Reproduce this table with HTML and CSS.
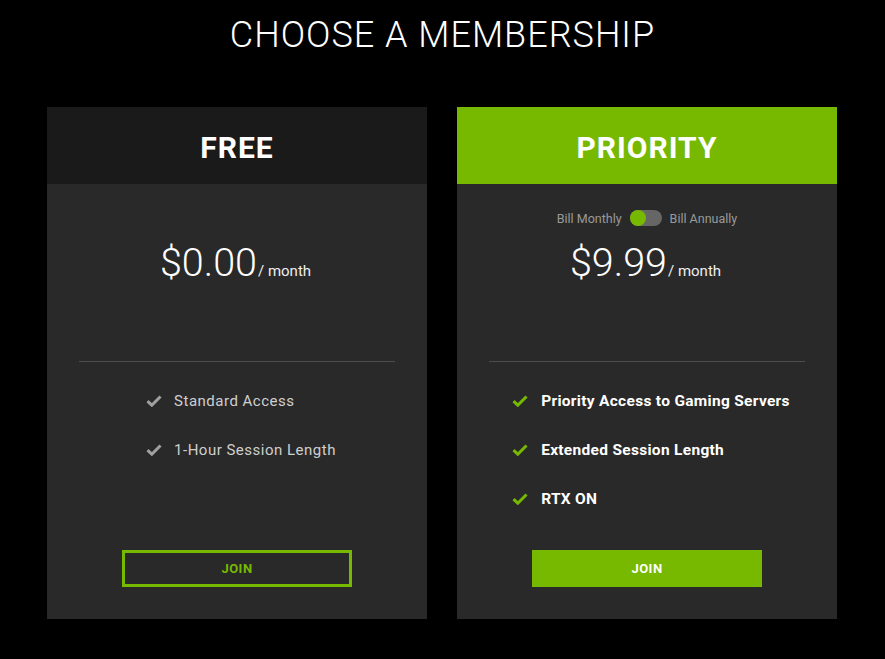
FILE: index.html
```
<!DOCTYPE html>
<html>
<head>
<meta charset="utf-8">
<link rel="stylesheet" href="styles.css">
</head>
<body>
<main class="page">
  <h1 class="title">CHOOSE A MEMBERSHIP</h1>
  <div class="plans">
    <section class="card">
      <div class="card-head free">FREE</div>
      <div class="card-body">
        <div class="top">
          <div class="billing hidden"><span>Bill Monthly</span><span class="toggle"><span class="knob"></span></span><span>Bill Annually</span></div>
          <div class="price"><span class="amount">$0.00</span><span class="per">/ month</span></div>
        </div>
        <ul class="features">
          <li><svg class="check" viewBox="0 0 16 12"><path d="M1.5 6.2 L5.8 10.2 L14.5 1.5" /></svg><span>Standard Access</span></li>
          <li><svg class="check" viewBox="0 0 16 12"><path d="M1.5 6.2 L5.8 10.2 L14.5 1.5" /></svg><span>1-Hour Session Length</span></li>
        </ul>
        <button class="join outline">JOIN</button>
      </div>
    </section>
    <section class="card">
      <div class="card-head priority">PRIORITY</div>
      <div class="card-body">
        <div class="top">
          <div class="billing"><span>Bill Monthly</span><span class="toggle"><span class="knob"></span></span><span>Bill Annually</span></div>
          <div class="price"><span class="amount">$9.99</span><span class="per">/ month</span></div>
        </div>
        <ul class="features strong">
          <li><svg class="check" viewBox="0 0 16 12"><path d="M1.5 6.2 L5.8 10.2 L14.5 1.5" /></svg><span>Priority Access to Gaming Servers</span></li>
          <li><svg class="check" viewBox="0 0 16 12"><path d="M1.5 6.2 L5.8 10.2 L14.5 1.5" /></svg><span>Extended Session Length</span></li>
          <li><svg class="check" viewBox="0 0 16 12"><path d="M1.5 6.2 L5.8 10.2 L14.5 1.5" /></svg><span>RTX ON</span></li>
        </ul>
        <button class="join filled">JOIN</button>
      </div>
    </section>
  </div>
</main>
</body>
</html>
```
FILE: styles.css
```
* { box-sizing: border-box; }
html, body { margin: 0; padding: 0; background: #000; }
body { font-family: Roboto, "Liberation Sans", sans-serif; color: #fff; }
.page { width: 885px; height: 659px; padding-top: 13px; }
.title {
  margin: 0;
  text-align: center;
  font-family: Roboto, sans-serif;
  font-weight: 300;
  font-size: 36px;
  line-height: 44px;
  letter-spacing: 1px;
  color: #fff;
}
.plans {
  display: grid;
  grid-template-columns: 380px 380px;
  column-gap: 30px;
  padding-left: 47px;
  margin-top: 50px;
}
.card { background: #292929; height: 512px; display: flex; flex-direction: column; }
.card-head {
  height: 77px;
  display: flex; align-items: center; justify-content: center;
  font-weight: 700; font-size: 30px; letter-spacing: 1px;
  padding-top: 3px;
}
.card-head.free { background: #1a1a1a; }
.card-head.priority { background: #76b900; }
.card-body { flex: 1; display: flex; flex-direction: column; align-items: center; padding: 0 32px 32px; }
.top { width: 100%; height: 178px; border-bottom: 1px solid #4d4d4d; padding-top: 24px; display: flex; flex-direction: column; align-items: center; }
.billing { display: flex; align-items: center; gap: 8px; font-size: 12.5px; color: #9a9a9a; height: 20px; }
.billing.hidden { visibility: hidden; }
.toggle { width: 32px; height: 16px; border-radius: 8px; background: #666; position: relative; }
.knob { position: absolute; left: 0; top: 0; width: 16px; height: 16px; border-radius: 50%; background: #76b900; }
.price { margin-top: 13px; display: flex; align-items: baseline; margin-left: -3px; }
.amount { font-weight: 300; font-size: 39.5px; line-height: 44px; }
.per { font-size: 15px; color: #eee; margin-left: 1px; }
.features { list-style: none; margin: 27px 0 0 8px; padding: 0; }
.features li { display: flex; align-items: center; height: 24px; margin-bottom: 25px; font-size: 15px; color: #cfcfcf; letter-spacing: 0.5px; }
.features .check { width: 16px; height: 12px; margin-right: 12px; fill: none; stroke: #a0a0a0; stroke-width: 3; }
.features.strong li { color: #fff; font-weight: 700; font-size: 15.5px; letter-spacing: 0.3px; }
.features.strong .check { stroke: #76b900; margin-right: 13px; }
.join {
  margin-top: auto;
  width: 230px; height: 37px;
  font-family: Roboto, sans-serif;
  font-weight: 700; font-size: 13px; letter-spacing: 0.5px;
  cursor: pointer;
}
.join.outline { background: transparent; border: 3px solid #76b900; color: #76b900; }
.join.filled { background: #76b900; border: none; color: #fff; }
```
